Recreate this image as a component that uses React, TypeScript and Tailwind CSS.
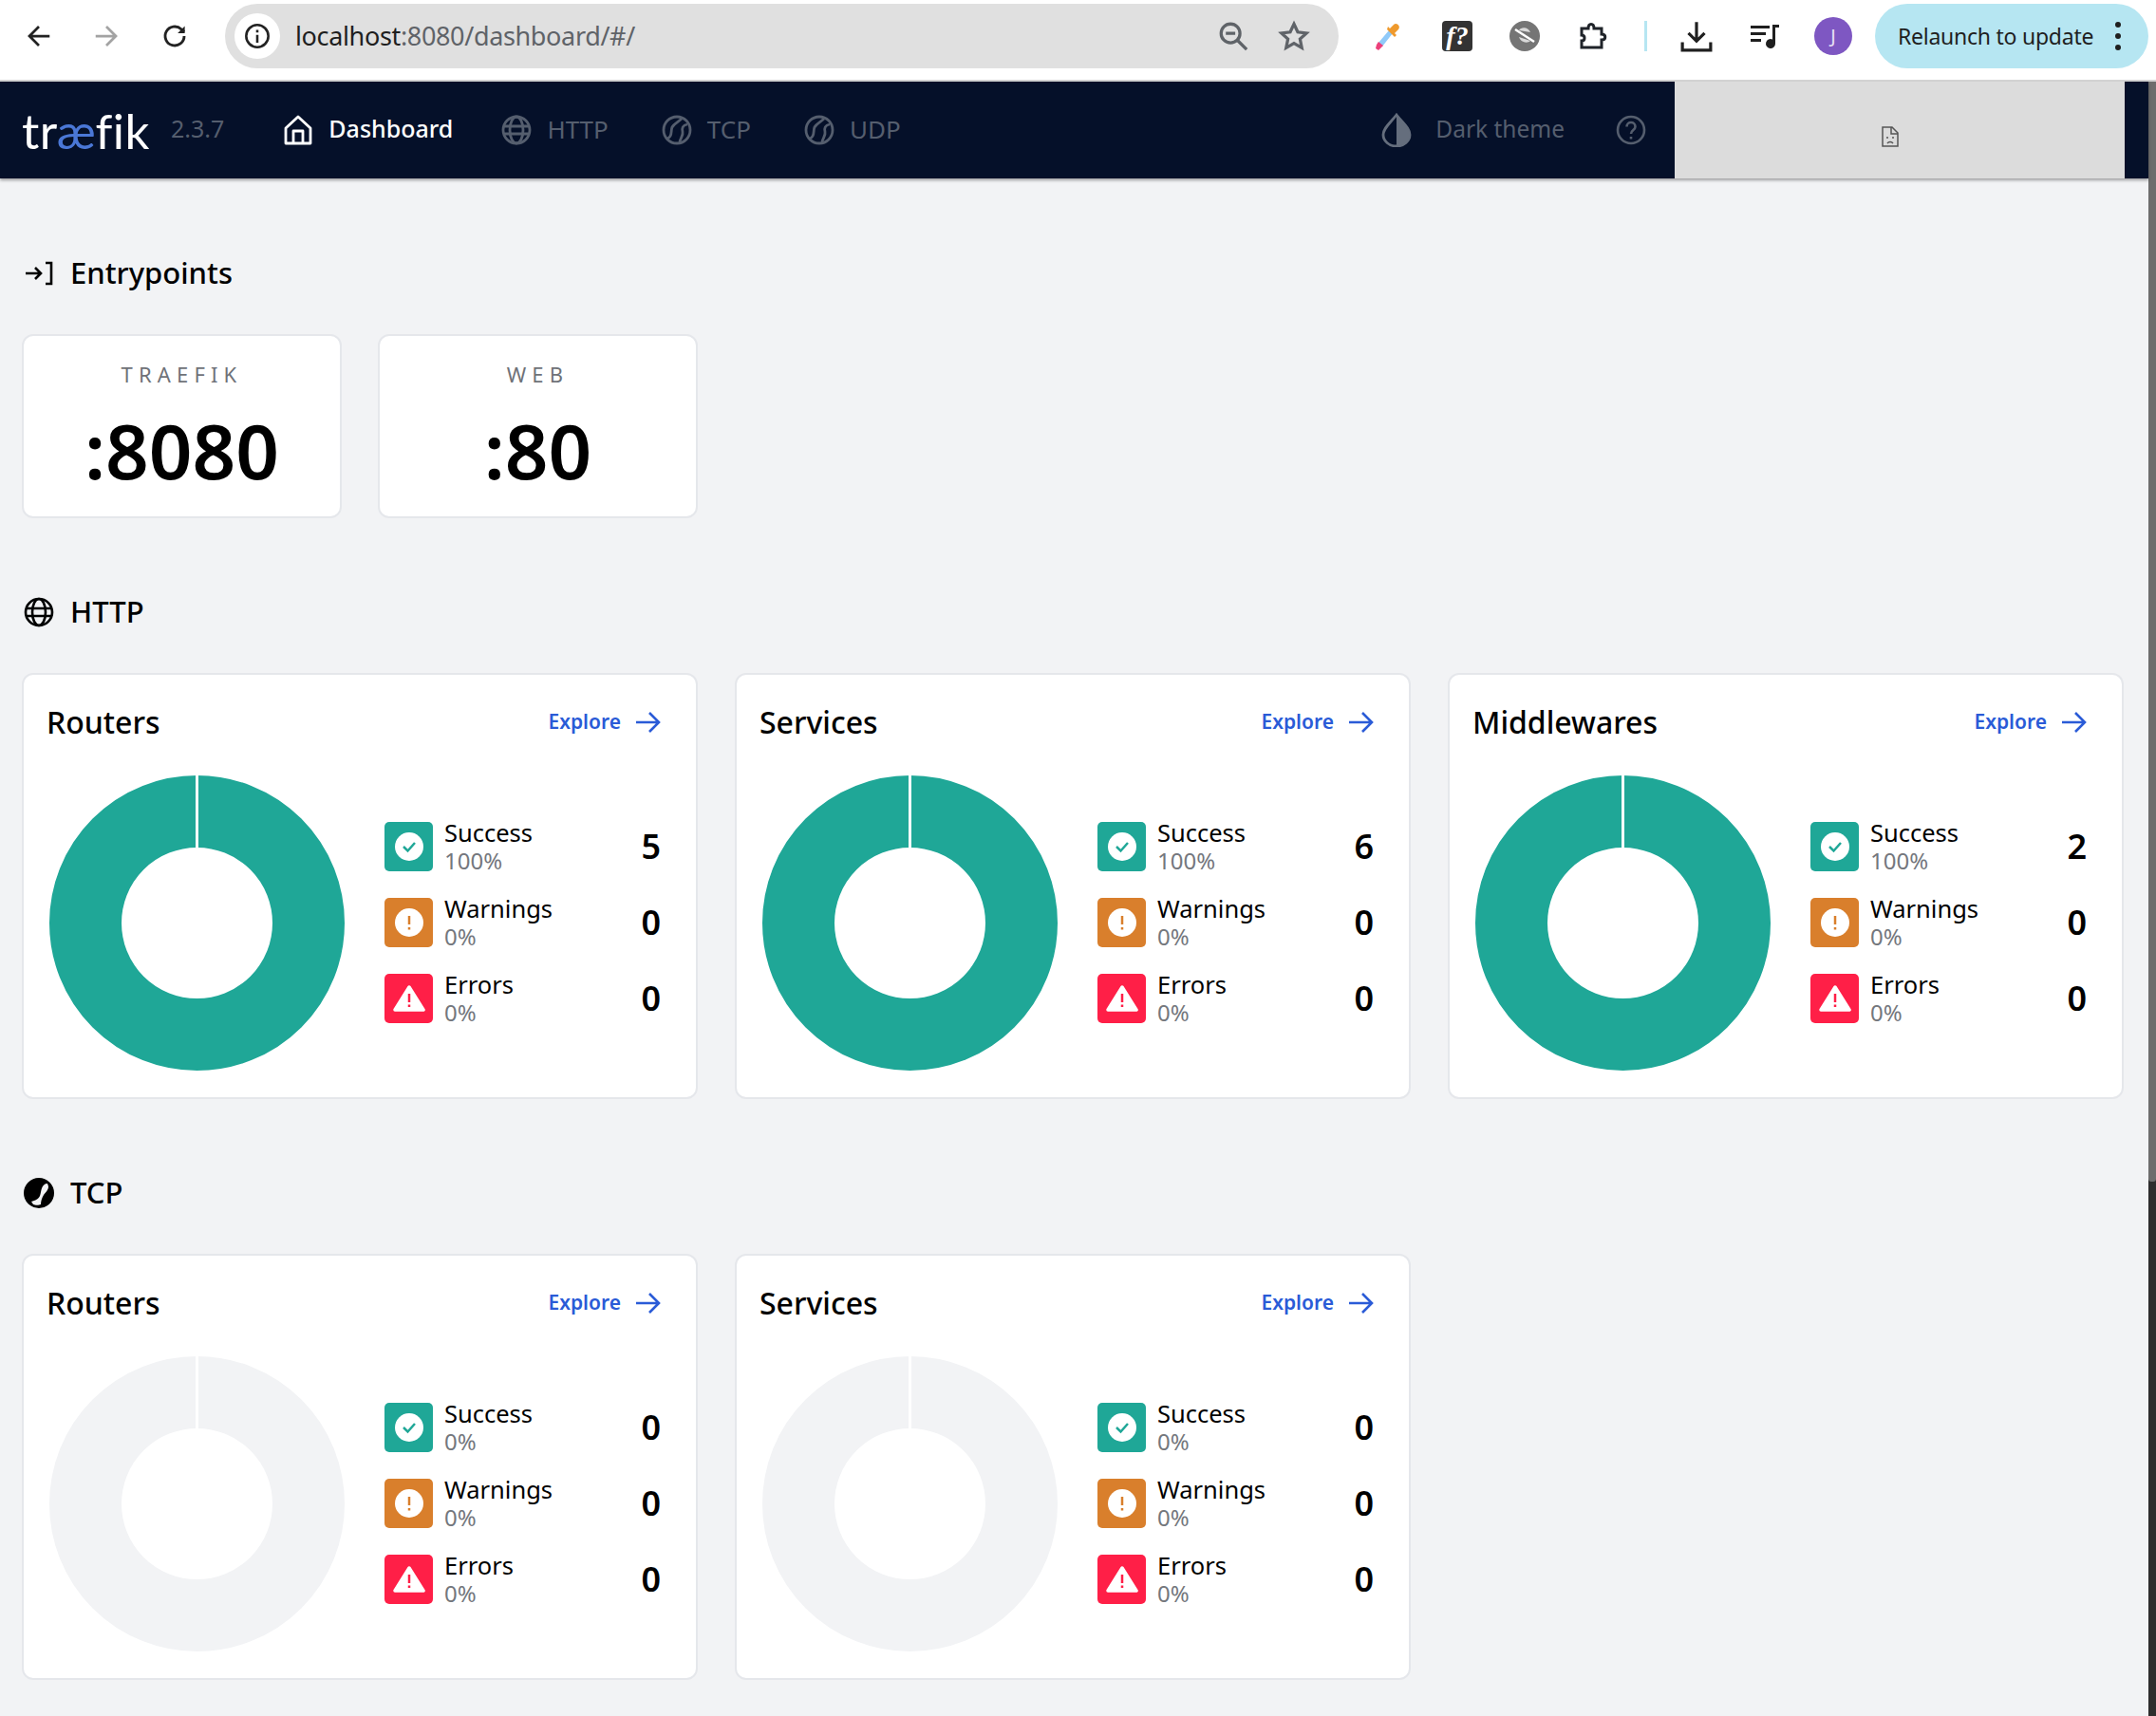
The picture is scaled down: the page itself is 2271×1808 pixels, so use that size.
import React from "react";

const FONT = "font-['Noto_Sans',sans-serif]";

function Globe({ className, sw = 2 }: { className?: string; sw?: number }) {
  return (
    <svg viewBox="0 0 32 32" fill="none" stroke="currentColor" strokeWidth={sw} className={className}>
      <circle cx="16" cy="16" r="14" />
      <ellipse cx="16" cy="16" rx="7" ry="14" />
      <path d="M2.5 12h27M2.5 20h27" />
    </svg>
  );
}

function TcpOutline({ className }: { className?: string }) {
  return (
    <svg viewBox="0 0 32 32" fill="none" stroke="currentColor" strokeWidth="2.800" className={className}>
      <circle cx="16" cy="16" r="14" />
      <path d="M6 25C12 23 9 17 11 13C13 9 17 8 21 4" />
      <path d="M27 10C22 11 21 14 22 18C23 22 19 25 19 29" />
    </svg>
  );
}

function TcpSolid({ className }: { className?: string }) {
  return (
    <svg viewBox="0 0 32 32" className={className}>
      <circle cx="16" cy="16" r="16" fill="currentColor" />
      <path d="M25 6c-3 0-5 2-6 5s-1 5-2 8c-1 3-5 5-9 6l2 3c2 1 6 1 8 0 0-3 1-7 3-10 2-3 5-5 5-9z" fill="#f2f3f5" />
    </svg>
  );
}

function Back({ color, flip }: { color: string; flip?: boolean }) {
  return (
    <svg viewBox="0 0 24 24" fill="none" stroke={color} strokeWidth="2.200" className={`w-[30px] h-[30px] ${flip ? "-scale-x-100" : ""}`}>
      <path d="M21 12H4M12 4l-8 8 8 8" />
    </svg>
  );
}

function Chrome() {
  return (
    <div className={`h-[86px] bg-white border-b-2 border-[#d4d4d4] flex items-center pb-[8px] ${FONT}`}>
      <div className="w-[237px] flex items-center shrink-0">
        <div className="w-[82px] flex justify-center"><Back color="#222" /></div>
        <div className="w-[60px] flex justify-center"><Back color="#a3a3a3" flip /></div>
        <div className="w-[84px] flex justify-center">
          <svg viewBox="0 0 24 24" fill="none" stroke="#222" strokeWidth="2.300" className="w-[30px] h-[30px]">
            <path d="M20 12a8 8 0 1 1-2.500-5.800L20 8.500" />
            <path d="M20.500 3.500v6h-6z" fill="#222" stroke="none" />
          </svg>
        </div>
      </div>
      <div className="w-[1173px] h-[68px] bg-[#e0e0e0] rounded-full flex items-center pl-[10px] shrink-0">
        <div className="w-[48px] h-[48px] rounded-full bg-white flex items-center justify-center">
          <svg viewBox="0 0 24 24" fill="none" stroke="#222" strokeWidth="2.200" className="w-[28px] h-[28px]">
            <circle cx="12" cy="12" r="10" />
            <path d="M12 11v7M12 6.500v2.200" />
          </svg>
        </div>
        <div className="ml-[16px] text-[27px] text-[#5f6368] tracking-[-0.35px]">
          <span className="text-[#1f1f1f]">localhost</span>:8080/dashboard/#/
        </div>
        <div className="ml-auto flex items-center mr-[30px] gap-[30px]">
          <svg viewBox="0 0 24 24" fill="none" stroke="#5f6368" strokeWidth="2.300" className="w-[34px] h-[34px]">
            <circle cx="10" cy="10" r="7" />
            <path d="M6.500 10h7M15 15l7 7" />
          </svg>
          <svg viewBox="0 0 24 24" fill="none" stroke="#5f6368" strokeWidth="2.300" className="w-[34px] h-[34px]">
            <path d="M12 3l2.800 6 6.500.8-4.800 4.400 1.300 6.500L12 17.400 6.200 20.700l1.300-6.500L2.700 9.800 9.200 9z" />
          </svg>
        </div>
      </div>
      <div className="flex items-center ml-[36px] shrink-0">
        <svg viewBox="0 0 32 32" className="w-[32px] h-[32px]">
          <path d="M21 13L10 27l-4-4L17 10z" fill="#90caf9" />
          <path d="M11 26l-5 5-3-2 1-4 2-3z" fill="#ec407a" />
          <path d="M15 9l8 8 2-2-2-2 4-4c3-3-2-8-5-5l-4 4-2-2z" fill="#ef9a2d" />
        </svg>
        <div className="ml-[41px] w-[32px] h-[32px] rounded-[4px] bg-[#333] text-white flex items-center justify-center text-[28px] italic font-['Liberation_Serif',serif] font-bold leading-none">
          <span>f?</span>
        </div>
        <svg viewBox="0 0 32 32" className="ml-[39px] w-[32px] h-[32px]">
          <circle cx="16" cy="16" r="16" fill="#757575" />
          <path d="M6 9l20 13" stroke="#fff" strokeWidth="2.500" />
          <path d="M10 10c2-4 10-4 12 2zM10 17c2 6 9 7 12 4z" fill="#d9d9d9" />
        </svg>
        <svg viewBox="0 0 32 32" fill="none" stroke="#1f2329" strokeWidth="3" className="ml-[41px] w-[32px] h-[32px]">
          <path d="M3 8h7c0-6 6-6 6 0h8v6c5 0 5 6 0 6v8H3v-7c4 0 4-6 0-6z" />
        </svg>
        <div className="ml-[37px] w-[3px] h-[32px] bg-[#b6e6f2]" />
        <svg viewBox="0 0 32 32" fill="none" stroke="#1f1f1f" strokeWidth="3" className="ml-[35px] w-[34px] h-[34px]">
          <path d="M16 2v19M8 13l8 8 8-8M2 22v8h28v-8" />
        </svg>
        <svg viewBox="0 0 32 32" className="ml-[39px] w-[32px] h-[32px]" fill="#1f1f1f">
          <rect x="1" y="5" width="20" height="3" />
          <rect x="1" y="12" width="16" height="3" />
          <rect x="1" y="19" width="11" height="3" />
          <path d="M24 4h7v3h-4v17a5 5 0 1 1-3-4.500z" />
        </svg>
        <div className="ml-[36px] w-[40px] h-[40px] rounded-full bg-[#7e57c2] text-[#e8e0f5] text-[20px] flex items-center justify-center">J</div>
        <div className="ml-[24px] w-[288px] h-[68px] rounded-full bg-[#b6e6f2] flex items-center pl-[24px]">
          <span className="text-[23px] text-[#1f1f1f] tracking-[-0.25px] whitespace-nowrap">Relaunch to update</span>
          <div className="ml-[23px] flex flex-col gap-[6px]">
            <div className="w-[6px] h-[6px] rounded-full bg-[#1f1f1f]" />
            <div className="w-[6px] h-[6px] rounded-full bg-[#1f1f1f]" />
            <div className="w-[6px] h-[6px] rounded-full bg-[#1f1f1f]" />
          </div>
        </div>
      </div>
    </div>
  );
}

function NavItem({ icon, label, active, className }: { icon: React.ReactNode; label: string; active?: boolean; className?: string }) {
  return (
    <div className={`flex items-center gap-[16px] ${active ? "text-white font-medium text-[25px]" : "text-[#555e6e] text-[26px]"} ${className ?? ""}`}>
      {icon}
      <span className="-mt-[2px]">{label}</span>
    </div>
  );
}

function Nav() {
  return (
    <div className={`h-[102px] bg-[#051029] flex items-center shadow-[0_2px_3px_rgba(0,0,0,0.35)] relative ${FONT}`}>
      <div className="w-[1764px] flex items-center pl-[23px] shrink-0">
        <div className="text-[51px] leading-none text-white w-[136px] font-['Lato',sans-serif] tracking-[0.5px]">
          tr<span className="text-[#4a77d6] -mx-[1px]">æ</span>fik
        </div>
        <div className="ml-[21px] text-[25px] text-[#555e6e] -mt-[2px]">2.3.7</div>
        <NavItem
          className="ml-[62px]"
          active
          label="Dashboard"
          icon={
            <svg viewBox="0 0 32 32" fill="none" stroke="#fff" strokeWidth="2.800" className="w-[32px] h-[32px]">
              <path d="M3 30V14L16 2l13 12v16zM11 30V17h10v13" strokeLinejoin="round" />
            </svg>
          }
        />
        <NavItem className="ml-[51px]" label="HTTP" icon={<Globe className="w-[32px] h-[32px]" sw={2.800} />} />
        <NavItem className="ml-[56px]" label="TCP" icon={<TcpOutline className="w-[32px] h-[32px]" />} />
        <NavItem className="ml-[56px]" label="UDP" icon={<TcpOutline className="w-[32px] h-[32px]" />} />
        <div className="ml-auto flex items-center text-[#555e6e] text-[24.500px]">
          <svg viewBox="0 0 32 36" className="w-[32px] h-[36px]">
            <path d="M16 2C9 11 2 16 2 23a14 12 0 0 0 28 0C30 16 23 11 16 2z" fill="none" stroke="#656e7d" strokeWidth="2.800" />
            <path d="M16 2c7 9 14 14 14 21a14 12 0 0 1-14 12z" fill="#656e7d" />
          </svg>
          <span className="ml-[25px] -mt-[2px]">Dark theme</span>
          <svg viewBox="0 0 32 32" fill="none" stroke="#555e6e" strokeWidth="2.600" className="ml-[54px] w-[32px] h-[32px]">
            <circle cx="16" cy="16" r="14" />
            <path d="M11.500 12.500c0-6 9-6 9 0 0 3.500-4.500 3.500-4.500 7.500M16 23v2.500" />
          </svg>
          <div className="w-[30px]" />
        </div>
      </div>
      <div className="w-[474px] h-full bg-[#dcdcdc] flex items-center justify-center pt-[14px] pr-[20px] shrink-0">
        <svg viewBox="0 0 20 24" fill="none" stroke="#555" strokeWidth="1.500" className="w-[20px] h-[24px]">
          <path d="M2 2h10l6 6v14H2zM11 2v7h7M7 12v2M13 12v2M7 19c1.500-2 4.500-2 6 0" />
        </svg>
      </div>
    </div>
  );
}

function SectionTitle({ icon, children }: { icon: React.ReactNode; children: string }) {
  return (
    <div className="h-[40px] flex items-center text-[31px] font-medium text-black mb-[44px]">
      <div className="w-[32px] ml-[2px] mr-[17px] flex justify-center">{icon}</div>
      <span className="-mt-[2px]">{children}</span>
    </div>
  );
}

function EntryCard({ label, value }: { label: string; value: string }) {
  return (
    <div className="w-[337px] h-[194px] bg-white border-2 border-[#e5e7eb] rounded-[12px] flex flex-col items-center">
      <div className="mt-[25px] text-[22px] tracking-[0.28em] text-[#6f7278] leading-[30px]">{label}</div>
      <div className="mt-[20px] text-[80px] font-semibold text-black leading-[90px]">{value}</div>
    </div>
  );
}

function Donut({ active }: { active: boolean }) {
  const color = active ? "#1fa797" : "#f2f3f5";
  return (
    <svg viewBox="0 0 311 311" className="w-[311px] h-[311px] shrink-0">
      <circle cx="155.500" cy="155.500" r="117.500" fill="none" stroke={color} strokeWidth="76" />
      <rect x="154" y="0" width="3" height="76" fill="#fff" />
    </svg>
  );
}

function StatIcon({ kind }: { kind: "s" | "w" | "e" }) {
  const bg = kind === "s" ? "bg-[#1fa797]" : kind === "w" ? "bg-[#d97f2c]" : "bg-[#ff1f47]";
  return (
    <div className={`w-[51px] h-[52px] rounded-[5px] flex items-center justify-center shrink-0 ${bg}`}>
      {kind === "s" && (
        <svg viewBox="0 0 30 30" className="w-[30px] h-[30px]">
          <circle cx="15" cy="15" r="15" fill="#fff" />
          <path d="M9 15l4.500 4.500L21 11" fill="none" stroke="#1fa797" strokeWidth="2.500" />
        </svg>
      )}
      {kind === "w" && (
        <svg viewBox="0 0 30 30" className="w-[30px] h-[30px]">
          <circle cx="15" cy="15" r="15" fill="#fff" />
          <path d="M15 8v9M15 20v2.500" fill="none" stroke="#d97f2c" strokeWidth="2.500" />
        </svg>
      )}
      {kind === "e" && (
        <svg viewBox="0 0 34 30" className="w-[34px] h-[30px]">
          <path d="M17 3L32 27H2z" fill="#fff" stroke="#fff" strokeWidth="3.500" strokeLinejoin="round" />
          <path d="M17 10v9M17 21.500v2.500" fill="none" stroke="#ff1f47" strokeWidth="2.500" />
        </svg>
      )}
    </div>
  );
}

function StatRow({ kind, name, pct, value }: { kind: "s" | "w" | "e"; name: string; pct: string; value: number }) {
  return (
    <div className="h-[52px] flex items-center">
      <StatIcon kind={kind} />
      <div className="ml-[12px] flex flex-col -mt-[1px]">
        <span className="text-[25.500px] leading-[31px] text-black">{name}</span>
        <span className="text-[24px] leading-[28px] text-[#74777d]">{pct}</span>
      </div>
      <span className="ml-auto text-[36px] font-semibold text-black leading-[52px]">{value}</span>
    </div>
  );
}

function StatCard({ title, success }: { title: string; success: number }) {
  const on = success > 0;
  return (
    <div className="w-[712px] h-[449px] bg-white border-2 border-[#e5e7eb] rounded-[12px] pl-[24px] pr-[37px] pt-[30px]">
      <div className="flex items-center justify-between h-[40px]">
        <span className="text-[32px] font-medium text-black">{title}</span>
        <div className="flex items-center gap-[16px] text-[21px] font-semibold text-[#2a5bd7]">
          <span>Explore</span>
          <svg viewBox="0 0 26 24" fill="none" stroke="#2a5bd7" strokeWidth="2.600" className="w-[26px] h-[24px] -mt-[1px]">
            <path d="M0 12h24M14 2l10 10-10 10" />
          </svg>
        </div>
      </div>
      <div className="flex items-center mt-[36px]">
        <div className="ml-[3px]"><Donut active={on} /></div>
        <div className="ml-[42px] -mt-[2px] flex-1 flex flex-col gap-[28px]">
          <StatRow kind="s" name="Success" pct={on ? "100%" : "0%"} value={success} />
          <StatRow kind="w" name="Warnings" pct="0%" value={0} />
          <StatRow kind="e" name="Errors" pct="0%" value={0} />
        </div>
      </div>
    </div>
  );
}

export default function App() {
  return (
    <div className={`w-[2271px] h-[1808px] overflow-hidden bg-[#f2f3f5] ${FONT}`}>
      <Chrome />
      <div className="flex h-[1722px]">
        <div className="flex-1 min-w-0">
          <Nav />
          <div className="pl-[23px] pt-[80px]">
            <SectionTitle
              icon={
                <svg viewBox="0 0 30 26" fill="none" stroke="#000" strokeWidth="2.600" className="w-[30px] h-[26px]">
                  <path d="M1 13h16M11 7l6 6-6 6M22 2h6v22h-6" />
                </svg>
              }
            >
              Entrypoints
            </SectionTitle>
            <div className="flex gap-[38px]">
              <EntryCard label="TRAEFIK" value=":8080" />
              <EntryCard label="WEB" value=":80" />
            </div>
            <div className="mt-[79px]">
              <SectionTitle icon={<Globe className="w-[32px] h-[32px] text-black" sw={2.600} />}>HTTP</SectionTitle>
              <div className="grid grid-cols-[repeat(3,712px)] gap-[39px]">
                <StatCard title="Routers" success={5} />
                <StatCard title="Services" success={6} />
                <StatCard title="Middlewares" success={2} />
              </div>
            </div>
            <div className="mt-[79px]">
              <SectionTitle icon={<TcpSolid className="w-[32px] h-[32px] text-black" />}>TCP</SectionTitle>
              <div className="grid grid-cols-[repeat(3,712px)] gap-[39px]">
                <StatCard title="Routers" success={0} />
                <StatCard title="Services" success={0} />
              </div>
            </div>
          </div>
        </div>
        <div className="w-[8px] bg-[#2d2d2d] shrink-0">
          <div className="h-[1159px] bg-[#6d6d6d] rounded-b-[3px]" />
        </div>
      </div>
    </div>
  );
}
